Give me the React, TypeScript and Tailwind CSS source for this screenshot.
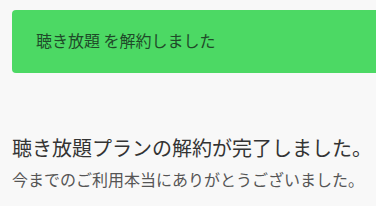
export default function App() {
  return (
    <div
      className="min-h-[206px] w-full overflow-hidden bg-[#f8f8f8] pt-[10px]"
      style={{ fontFamily: '"Noto Sans CJK JP", "Noto Sans", sans-serif' }}
    >
      <div className="ml-3 flex h-[63px] items-center rounded-l-[4px] bg-[#4cd964] pb-[3px] pl-6">
        <p className="whitespace-nowrap text-[16px] leading-6 text-[#1f4a29]">聴き放題 を解約しました</p>
      </div>
      <div className="pl-3 pt-[60px]">
        <h1 className="whitespace-nowrap text-[20px] leading-[30px] text-[#333333]">聴き放題プランの解約が完了しました。</h1>
        <p className="mt-[4px] whitespace-nowrap text-[16px] leading-6 text-[#555555]">今までのご利用本当にありがとうございました。</p>
      </div>
    </div>
  );
}
